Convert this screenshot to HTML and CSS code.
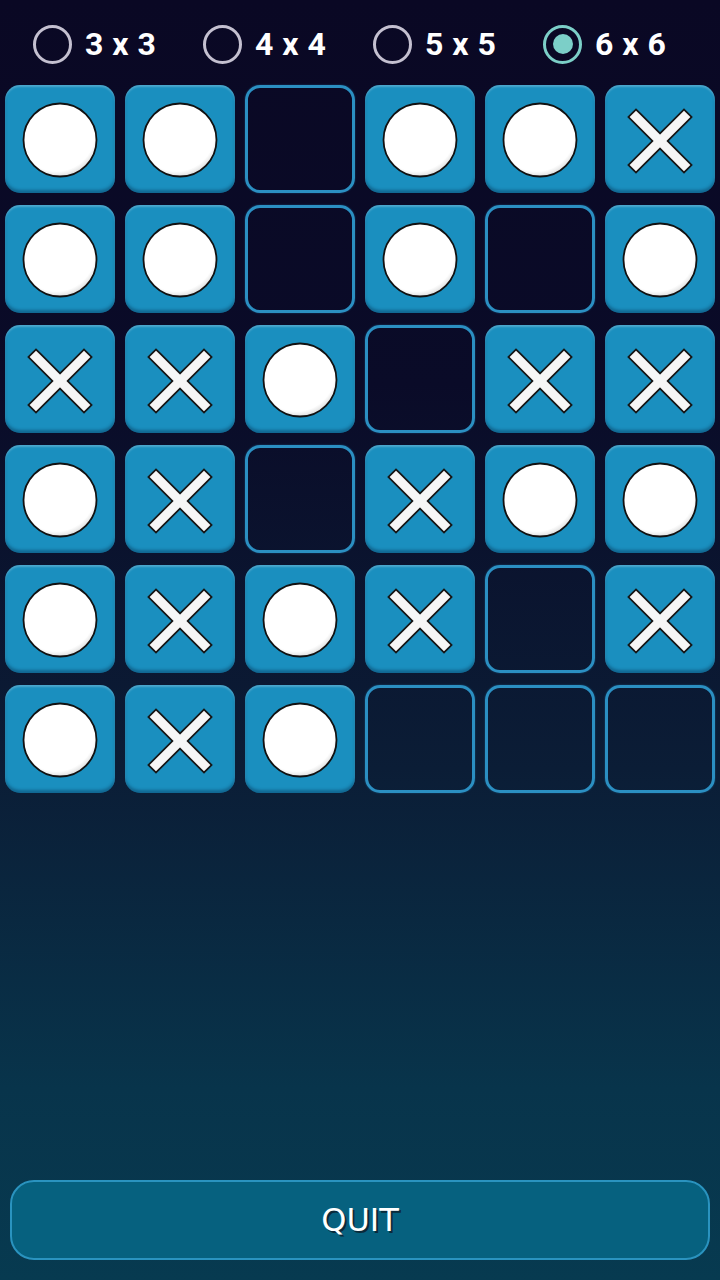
FILE: index.html
```html
<!DOCTYPE html>
<html lang="en">

<head>
    <meta charset="UTF-8" />
    <meta name="viewport" content="width=device-width, initial-scale=1.0" />
    <title>Tic Tac Toe</title>
    <link rel="stylesheet" href="styles.css">
</head>

<body>
    <div class="game-screen">
        <div class="size-picker">
            <label class="size-option"><span class="radio"></span><span class="size-label">3 x 3</span></label>
            <label class="size-option"><span class="radio"></span><span class="size-label">4 x 4</span></label>
            <label class="size-option"><span class="radio"></span><span class="size-label">5 x 5</span></label>
            <label class="size-option"><span class="radio checked"></span><span class="size-label">6 x 6</span></label>
        </div>

        <div class="board" id="board"></div>

        <div class="spacer"></div>

        <button class="btn-quit">QUIT</button>
    </div>

    <svg width="0" height="0" class="defs">
        <defs>
            <radialGradient id="discShade" cx="45%" cy="40%" r="60%">
                <stop offset="88%" stop-color="#ffffff" />
                <stop offset="100%" stop-color="#e2e2e2" />
            </radialGradient>
            <symbol id="mark-o" viewBox="0 0 110 108">
                <circle cx="55" cy="55" r="36.5" fill="url(#discShade)" stroke="#111" stroke-width="1.8" />
            </symbol>
            <symbol id="mark-x" viewBox="0 0 110 108">
                <g stroke="#151515" stroke-width="12.5" stroke-linecap="square">
                    <line x1="31" y1="32" x2="79" y2="80" />
                    <line x1="79" y1="32" x2="31" y2="80" />
                </g>
                <g stroke="#f6f6f6" stroke-width="9" stroke-linecap="square">
                    <line x1="31" y1="32" x2="79" y2="80" />
                    <line x1="79" y1="32" x2="31" y2="80" />
                </g>
            </symbol>
        </defs>
    </svg>

    <script>
        const layout = [
            'OO-OOX',
            'OO-O-O',
            'XXO-XX',
            'OX-XOO',
            'OXOX-X',
            'OXO---'
        ];

        const board = document.getElementById('board');

        layout.forEach(function (row) {
            row.split('').forEach(function (mark) {
                const cell = document.createElement('div');
                if (mark === '-') {
                    cell.className = 'cell empty';
                } else {
                    cell.className = 'cell filled';
                    const id = mark === 'O' ? 'mark-o' : 'mark-x';
                    cell.innerHTML = '<svg class="mark" viewBox="0 0 110 108"><use href="#' + id + '"/></svg>';
                }
                board.appendChild(cell);
            });
        });
    </script>
</body>

</html>
```

FILE: styles.css
```css
* {
    box-sizing: border-box;
}

body {
    margin: 0;
    font-family: Roboto, "Liberation Sans", sans-serif;
    background: linear-gradient(to bottom, #0a0824 0%, #0a0b28 30%, #0b1d36 60%, #08344b 85%, #073a50 100%);
    min-height: 1280px;
}

.defs {
    position: absolute;
}

.game-screen {
    display: flex;
    flex-direction: column;
    height: 1280px;
    padding: 0 5px;
}

.size-picker {
    display: flex;
    align-items: center;
    height: 85px;
    padding-left: 28px;
    padding-top: 3px;
}

.size-option {
    display: flex;
    align-items: center;
    gap: 13px;
    width: 170px;
}

.radio {
    width: 39px;
    height: 39px;
    border-radius: 50%;
    border: 3px solid #c4c0d0;
    display: flex;
    justify-content: center;
    align-items: center;
}

.radio.checked {
    border-color: #7ccfc8;
}

.radio.checked::after {
    content: "";
    width: 20px;
    height: 20px;
    border-radius: 50%;
    background-color: #7ccfc8;
}

.size-label {
    color: #fff;
    font-size: 32px;
    font-weight: bold;
    letter-spacing: 0.5px;
}

.board {
    display: grid;
    grid-template-columns: repeat(6, 110px);
    grid-auto-rows: 108px;
    column-gap: 10px;
    row-gap: 12px;
}

.cell {
    border-radius: 15px;
}

.cell.filled {
    background-color: #1a8fbf;
    box-shadow: inset 0 2px 2px rgba(255, 255, 255, 0.22), inset 0 -3px 3px rgba(0, 30, 60, 0.35);
}

.cell.empty {
    border: 3px solid #2b8fc2;
    box-shadow: 0 0 2px rgba(42, 140, 191, 0.5);
}

.mark {
    display: block;
    width: 110px;
    height: 108px;
}

.spacer {
    flex: 1;
}

.btn-quit {
    margin: 0 5px 20px;
    height: 80px;
    border: 2px solid #2a93bf;
    border-radius: 24px;
    background-color: #06617f;
    color: #fff;
    font-family: "DejaVu Sans", sans-serif;
    font-size: 32px;
    text-shadow: 2px 2px 0 #0a2a3a;
    cursor: pointer;
}
```
